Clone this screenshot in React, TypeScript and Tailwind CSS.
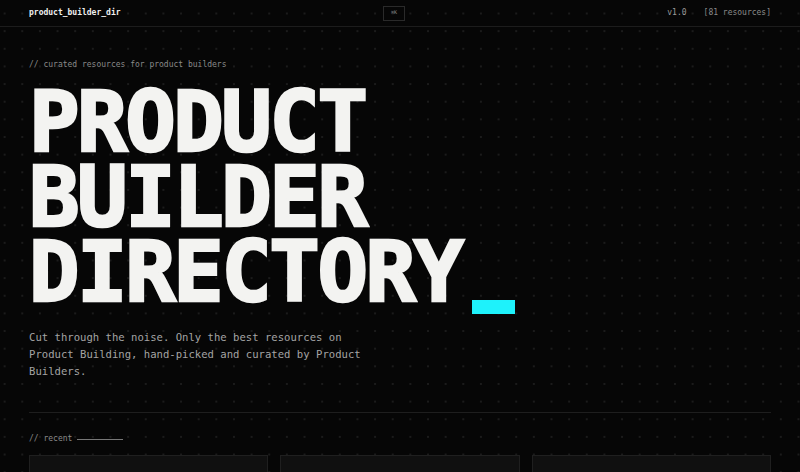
import React from "react";

const mono = { fontFamily: '"DejaVu Sans Mono", "Liberation Mono", monospace' };

export default function App() {
  return (
    <div
      className="w-full h-[472px] overflow-hidden bg-[#060606] bg-[radial-gradient(circle,#1b1b1b_0.9px,transparent_1.3px)] [background-size:17.647px_17.647px] [background-position:-4.2px_4.7px] text-white"
      style={mono}
    >
      <header className="h-[27px] border-b border-[#1c1c1c] flex items-center justify-between px-[29px]">
        <div className="text-[8px] leading-[12px] font-bold text-[#f0f0f0]">product_builder_dir</div>
        <div className="w-[22px] h-[15px] border border-[#2a2a2a] flex items-center justify-center text-[5px] text-[#8a8a8a]">
          ⌘K
        </div>
        <div className="flex items-center gap-[17px] text-[8px] leading-[12px]">
          <span className="text-[#9a9a9a]">v1.0</span>
          <span className="text-[#8a8a8a]">[81 resources]</span>
        </div>
      </header>

      <main className="px-[29px]">
        <p className="mt-[32px] text-[8px] leading-[12px] text-[#8a8a8a]">// curated resources for product builders</p>

        <h1 className="mt-[14px] text-[84px] leading-[75px] font-bold tracking-[-2.5px] text-[#f3f3f1] uppercase [-webkit-text-stroke:2.6px_#f3f3f1]">
          <span className="block">PRODUCT</span>
          <span className="block">BUILDER</span>
          <span className="block">
            DIRECTORY
            <span className="inline-block ml-[10px] w-[43px] h-[14px] bg-[#1ef2fb] align-[-13px] [-webkit-text-stroke:0]" />
          </span>
        </h1>

        <p className="mt-[15px] max-w-[350px] text-[10.6px] leading-[17px] text-[#a4a4a4]">
          Cut through the noise. Only the best resources on Product Building, hand-picked and curated by Product
          Builders.
        </p>

        <div className="mt-[32px] border-t border-[#1e1e1e]" />

        <div className="mt-[20px] flex items-center gap-[5px] text-[8px] leading-[12px] text-[#8a8a8a]">
          <span>// recent</span>
          <span className="w-[46px] h-px bg-[#777]" />
        </div>

        <div className="mt-[10px] grid grid-cols-3 gap-[12px]">
          <div className="h-[160px] bg-[#101010] border border-[#1f1f1f]" />
          <div className="h-[160px] bg-[#101010] border border-[#1f1f1f]" />
          <div className="h-[160px] bg-[#101010] border border-[#1f1f1f]" />
        </div>
      </main>
    </div>
  );
}
